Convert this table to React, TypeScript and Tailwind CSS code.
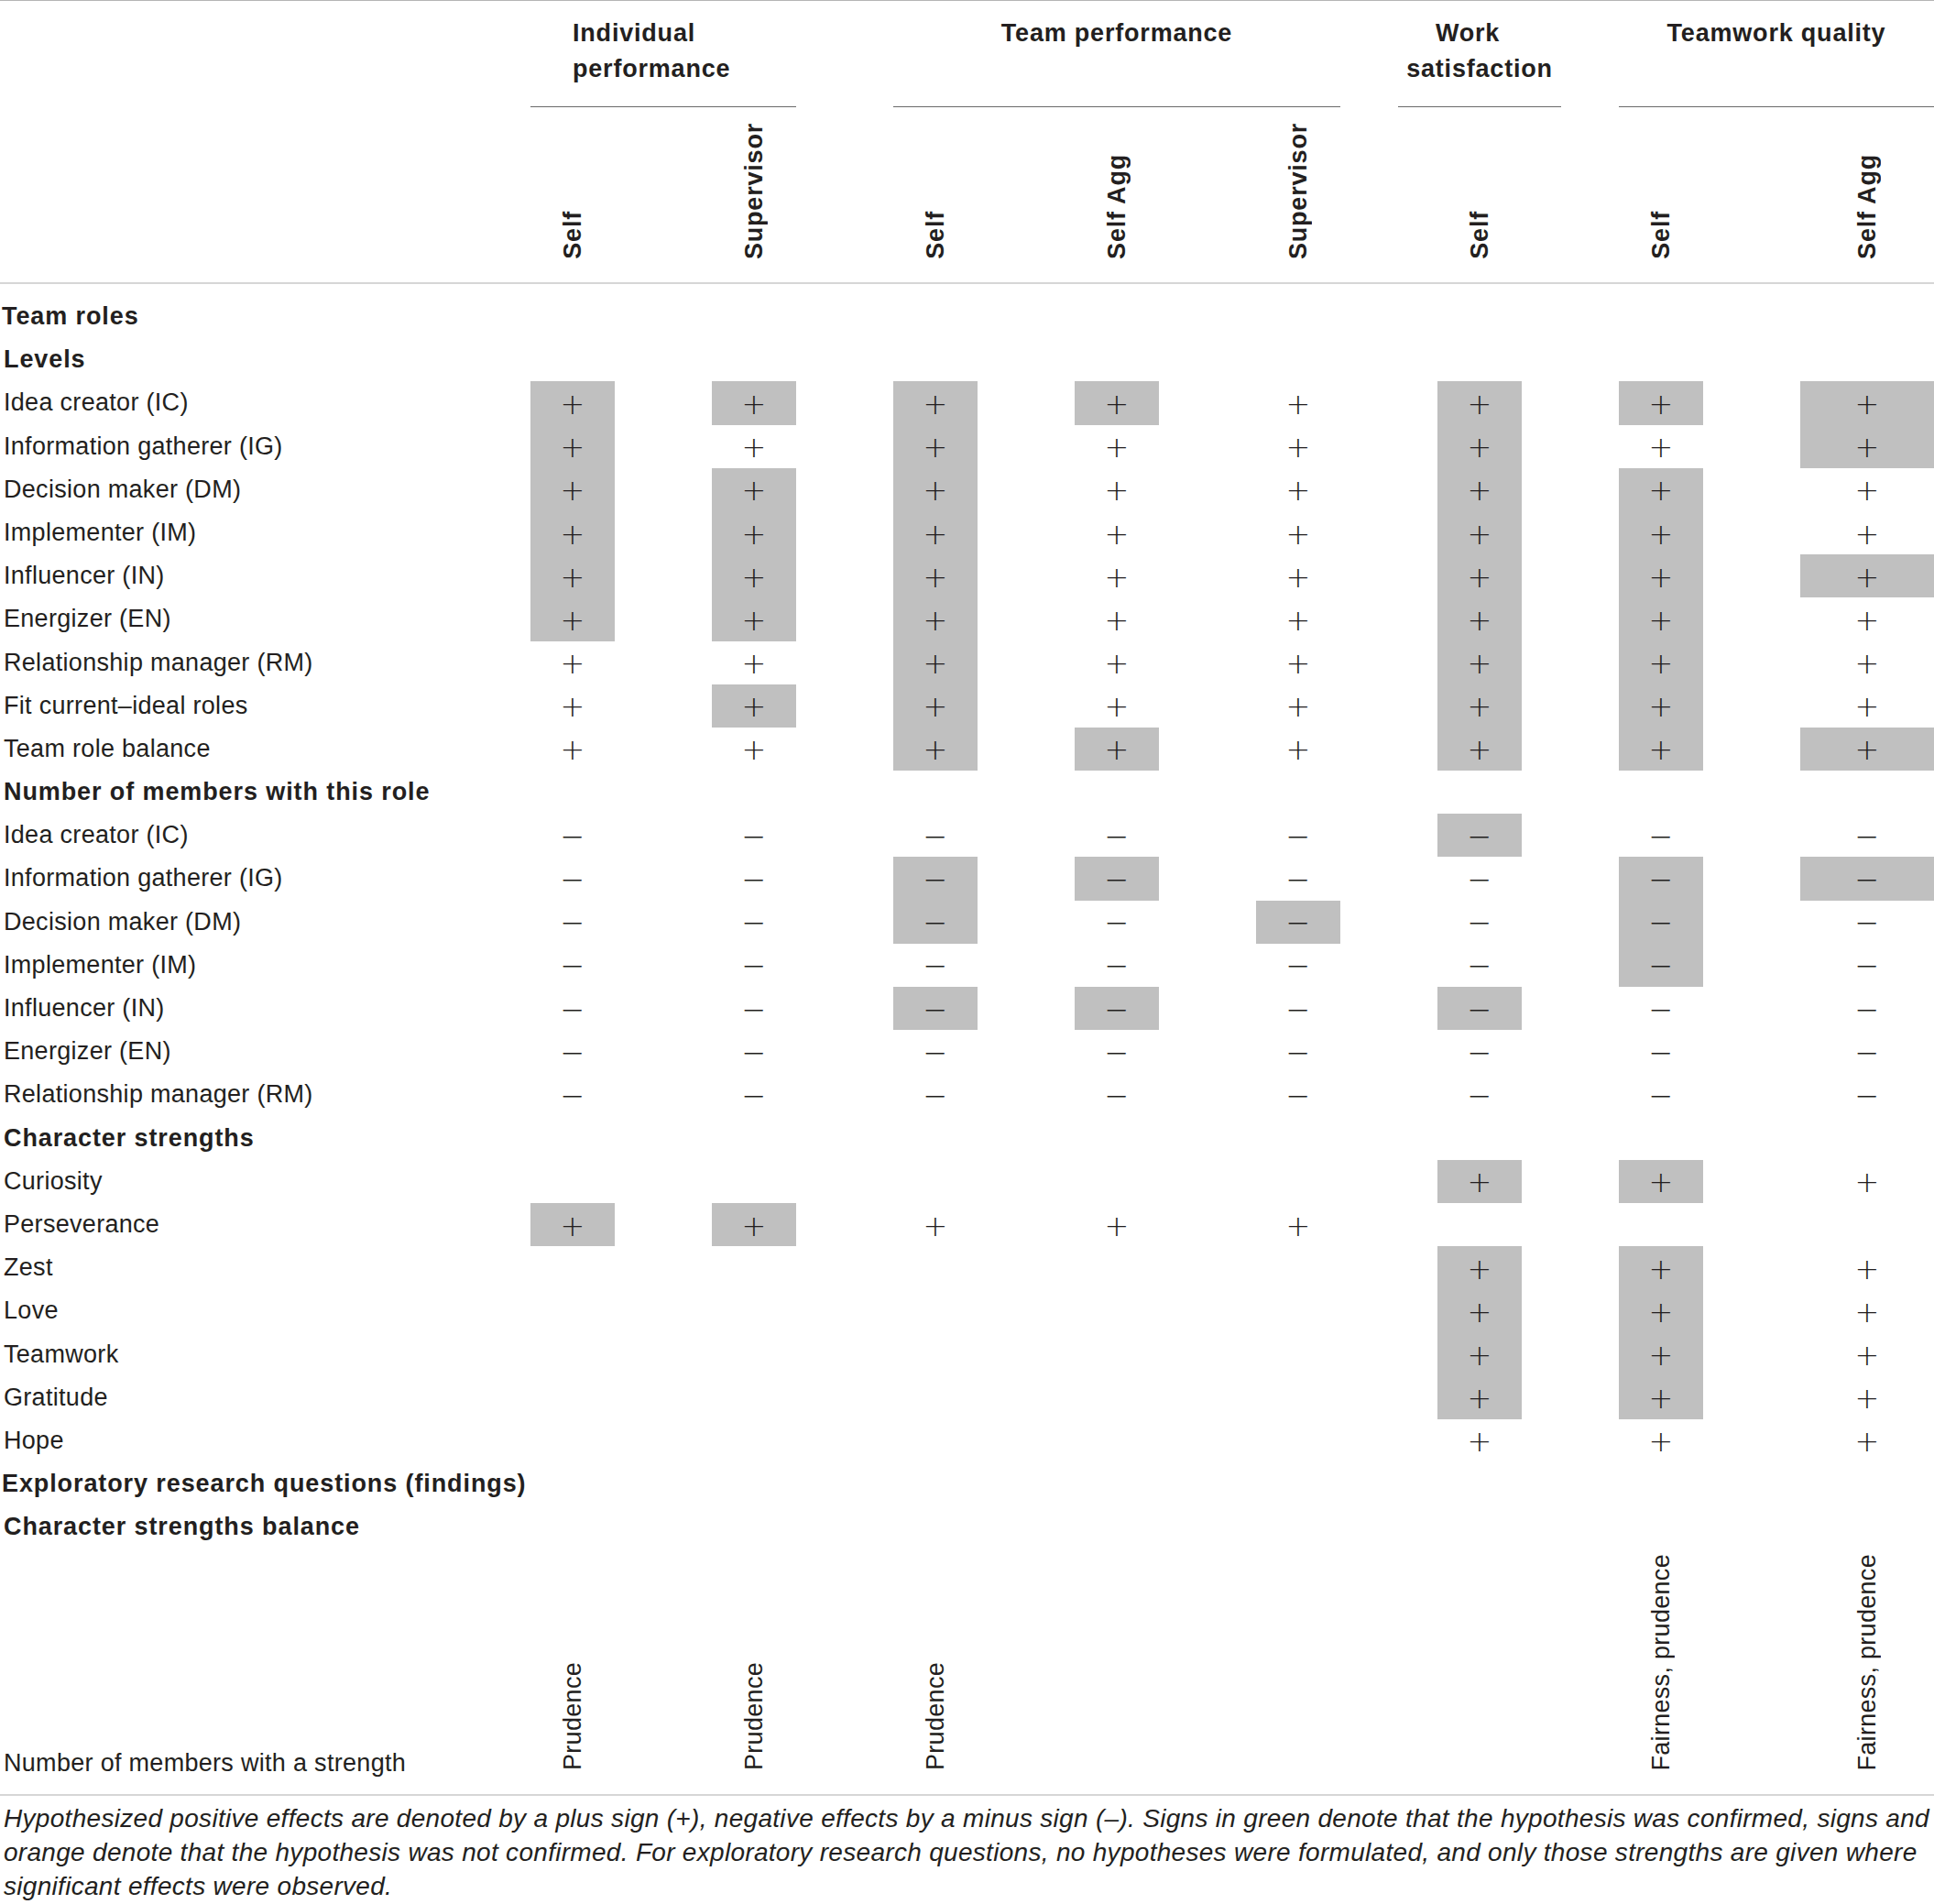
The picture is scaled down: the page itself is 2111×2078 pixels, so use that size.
import clsx from "clsx"

// one char per data column: P = shaded plus, p = plus, M = shaded minus, m = minus, . = empty
type Row = { label: string; cells?: string; section?: boolean; top?: boolean }

const rows: Row[] = [
  { label: "Team roles", section: true, top: true },
  { label: "Levels", section: true },
  { label: "Idea creator (IC)", cells: "PPPPpPPP" },
  { label: "Information gatherer (IG)", cells: "PpPppPpP" },
  { label: "Decision maker (DM)", cells: "PPPppPPp" },
  { label: "Implementer (IM)", cells: "PPPppPPp" },
  { label: "Influencer (IN)", cells: "PPPppPPP" },
  { label: "Energizer (EN)", cells: "PPPppPPp" },
  { label: "Relationship manager (RM)", cells: "ppPppPPp" },
  { label: "Fit current–ideal roles", cells: "pPPppPPp" },
  { label: "Team role balance", cells: "ppPPpPPP" },
  { label: "Number of members with this role", section: true },
  { label: "Idea creator (IC)", cells: "mmmmmMmm" },
  { label: "Information gatherer (IG)", cells: "mmMMmmMM" },
  { label: "Decision maker (DM)", cells: "mmMmMmMm" },
  { label: "Implementer (IM)", cells: "mmmmmmMm" },
  { label: "Influencer (IN)", cells: "mmMMmMmm" },
  { label: "Energizer (EN)", cells: "mmmmmmmm" },
  { label: "Relationship manager (RM)", cells: "mmmmmmmm" },
  { label: "Character strengths", section: true },
  { label: "Curiosity", cells: ".....PPp" },
  { label: "Perseverance", cells: "PPppp..." },
  { label: "Zest", cells: ".....PPp" },
  { label: "Love", cells: ".....PPp" },
  { label: "Teamwork", cells: ".....PPp" },
  { label: "Gratitude", cells: ".....PPp" },
  { label: "Hope", cells: ".....ppp" },
  { label: "Exploratory research questions (findings)", section: true, top: true },
  { label: "Character strengths balance", section: true },
]

const subHeads = ["Self", "Supervisor", "Self", "Self Agg", "Supervisor", "Self", "Self", "Self Agg"]
const lastRow = ["Prudence", "Prudence", "Prudence", "", "", "", "Fairness, prudence", "Fairness, prudence"]

const grid = "grid grid-cols-[473px_repeat(7,92px)_146px] gap-x-[106px]"

const Sign = ({ v }: { v: string }) => {
  const shaded = v === "P" || v === "M"
  const sign = v === "P" || v === "p" ? "+" : v === "M" || v === "m" ? "−" : ""
  return (
    <div className={clsx("flex items-center justify-center", shaded && "bg-[#c0c0c0]")}>
      {sign && (
        <span className="font-['DejaVu_Sans',sans-serif] text-[32px] font-extralight leading-[38px] translate-y-[1px]">
          {sign}
        </span>
      )}
    </div>
  )
}

const App = () => {
  return (
    <div className="w-[2111px] min-h-screen overflow-hidden bg-white font-['Liberation_Sans',Arial,sans-serif] text-[#231f20]">
      {/* header */}
      <div className="border-t border-[#b5b5b5]">
        <div className={clsx(grid, "h-[116px] text-[27px] font-bold tracking-[0.8px] leading-[39px]")}>
          <div className="col-start-2 col-span-2 border-b border-[#6a6a6a] pt-[16px] pl-[46px]">
            Individual
            <br />
            performance
          </div>
          <div className="col-start-4 col-span-3 border-b border-[#6a6a6a] pt-[16px] text-center">
            Team performance
          </div>
          <div className="col-start-7 -mx-[43px] border-b border-[#6a6a6a] pt-[16px] text-center">
            <div className="pr-[26px]">Work</div>
            <div>satisfaction</div>
          </div>
          <div className="col-start-8 col-span-2 border-b border-[#6a6a6a] pt-[16px] text-center">
            Teamwork quality
          </div>
        </div>
        <div className={clsx(grid, "h-[191px] text-[27px] font-bold tracking-[0.8px]")}>
          <div />
          {subHeads.map((s, i) => (
            <div key={i} className="flex items-end justify-center pb-[25px]">
              <span className="[writing-mode:vertical-rl] rotate-180 leading-[30px] whitespace-nowrap">{s}</span>
            </div>
          ))}
        </div>
      </div>

      {/* body */}
      <div className="border-t-2 border-[#d6d6d6] pt-[12px]">
        <div className={clsx(grid, "auto-rows-[47.2px] text-[27px] leading-[47.2px]")}>
          {rows.map((r, i) =>
            r.section ? (
              <div
                key={i}
                className={clsx(
                  "col-span-full whitespace-nowrap font-bold tracking-[0.9px]",
                  r.top ? "pl-[2px]" : "pl-[4px]"
                )}
              >
                {r.label}
              </div>
            ) : (
              [
                <div key={i + "l"} className="whitespace-nowrap pl-[4px] tracking-[0.3px]">
                  {r.label}
                </div>,
                ...(r.cells ?? "").split("").map((v, j) => <Sign key={i + "-" + j} v={v} />),
              ]
            )
          )}
        </div>

        <div className={clsx(grid, "h-[268px] text-[27px] tracking-[0.3px]")}>
          <div className="self-end whitespace-nowrap pb-[10px] pl-[4px] leading-[47.2px]">
            Number of members with a strength
          </div>
          {lastRow.map((s, i) => (
            <div key={i} className="flex items-end justify-center pb-[26px]">
              {s && (
                <span className="[writing-mode:vertical-rl] rotate-180 leading-[30px] whitespace-nowrap">{s}</span>
              )}
            </div>
          ))}
        </div>
      </div>

      {/* footnote */}
      <div className="border-t-2 border-[#d6d6d6] pt-[6px] pl-[4px] text-[28px] italic tracking-[0.3px] leading-[37px] whitespace-nowrap">
        <div>
          Hypothesized positive effects are denoted by a plus sign (+), negative effects by a minus sign (–). Signs in
          green denote that the hypothesis was confirmed, signs and
        </div>
        <div>
          orange denote that the hypothesis was not confirmed. For exploratory research questions, no hypotheses were
          formulated, and only those strengths are given where
        </div>
        <div>significant effects were observed.</div>
      </div>
    </div>
  )
}

export default App
